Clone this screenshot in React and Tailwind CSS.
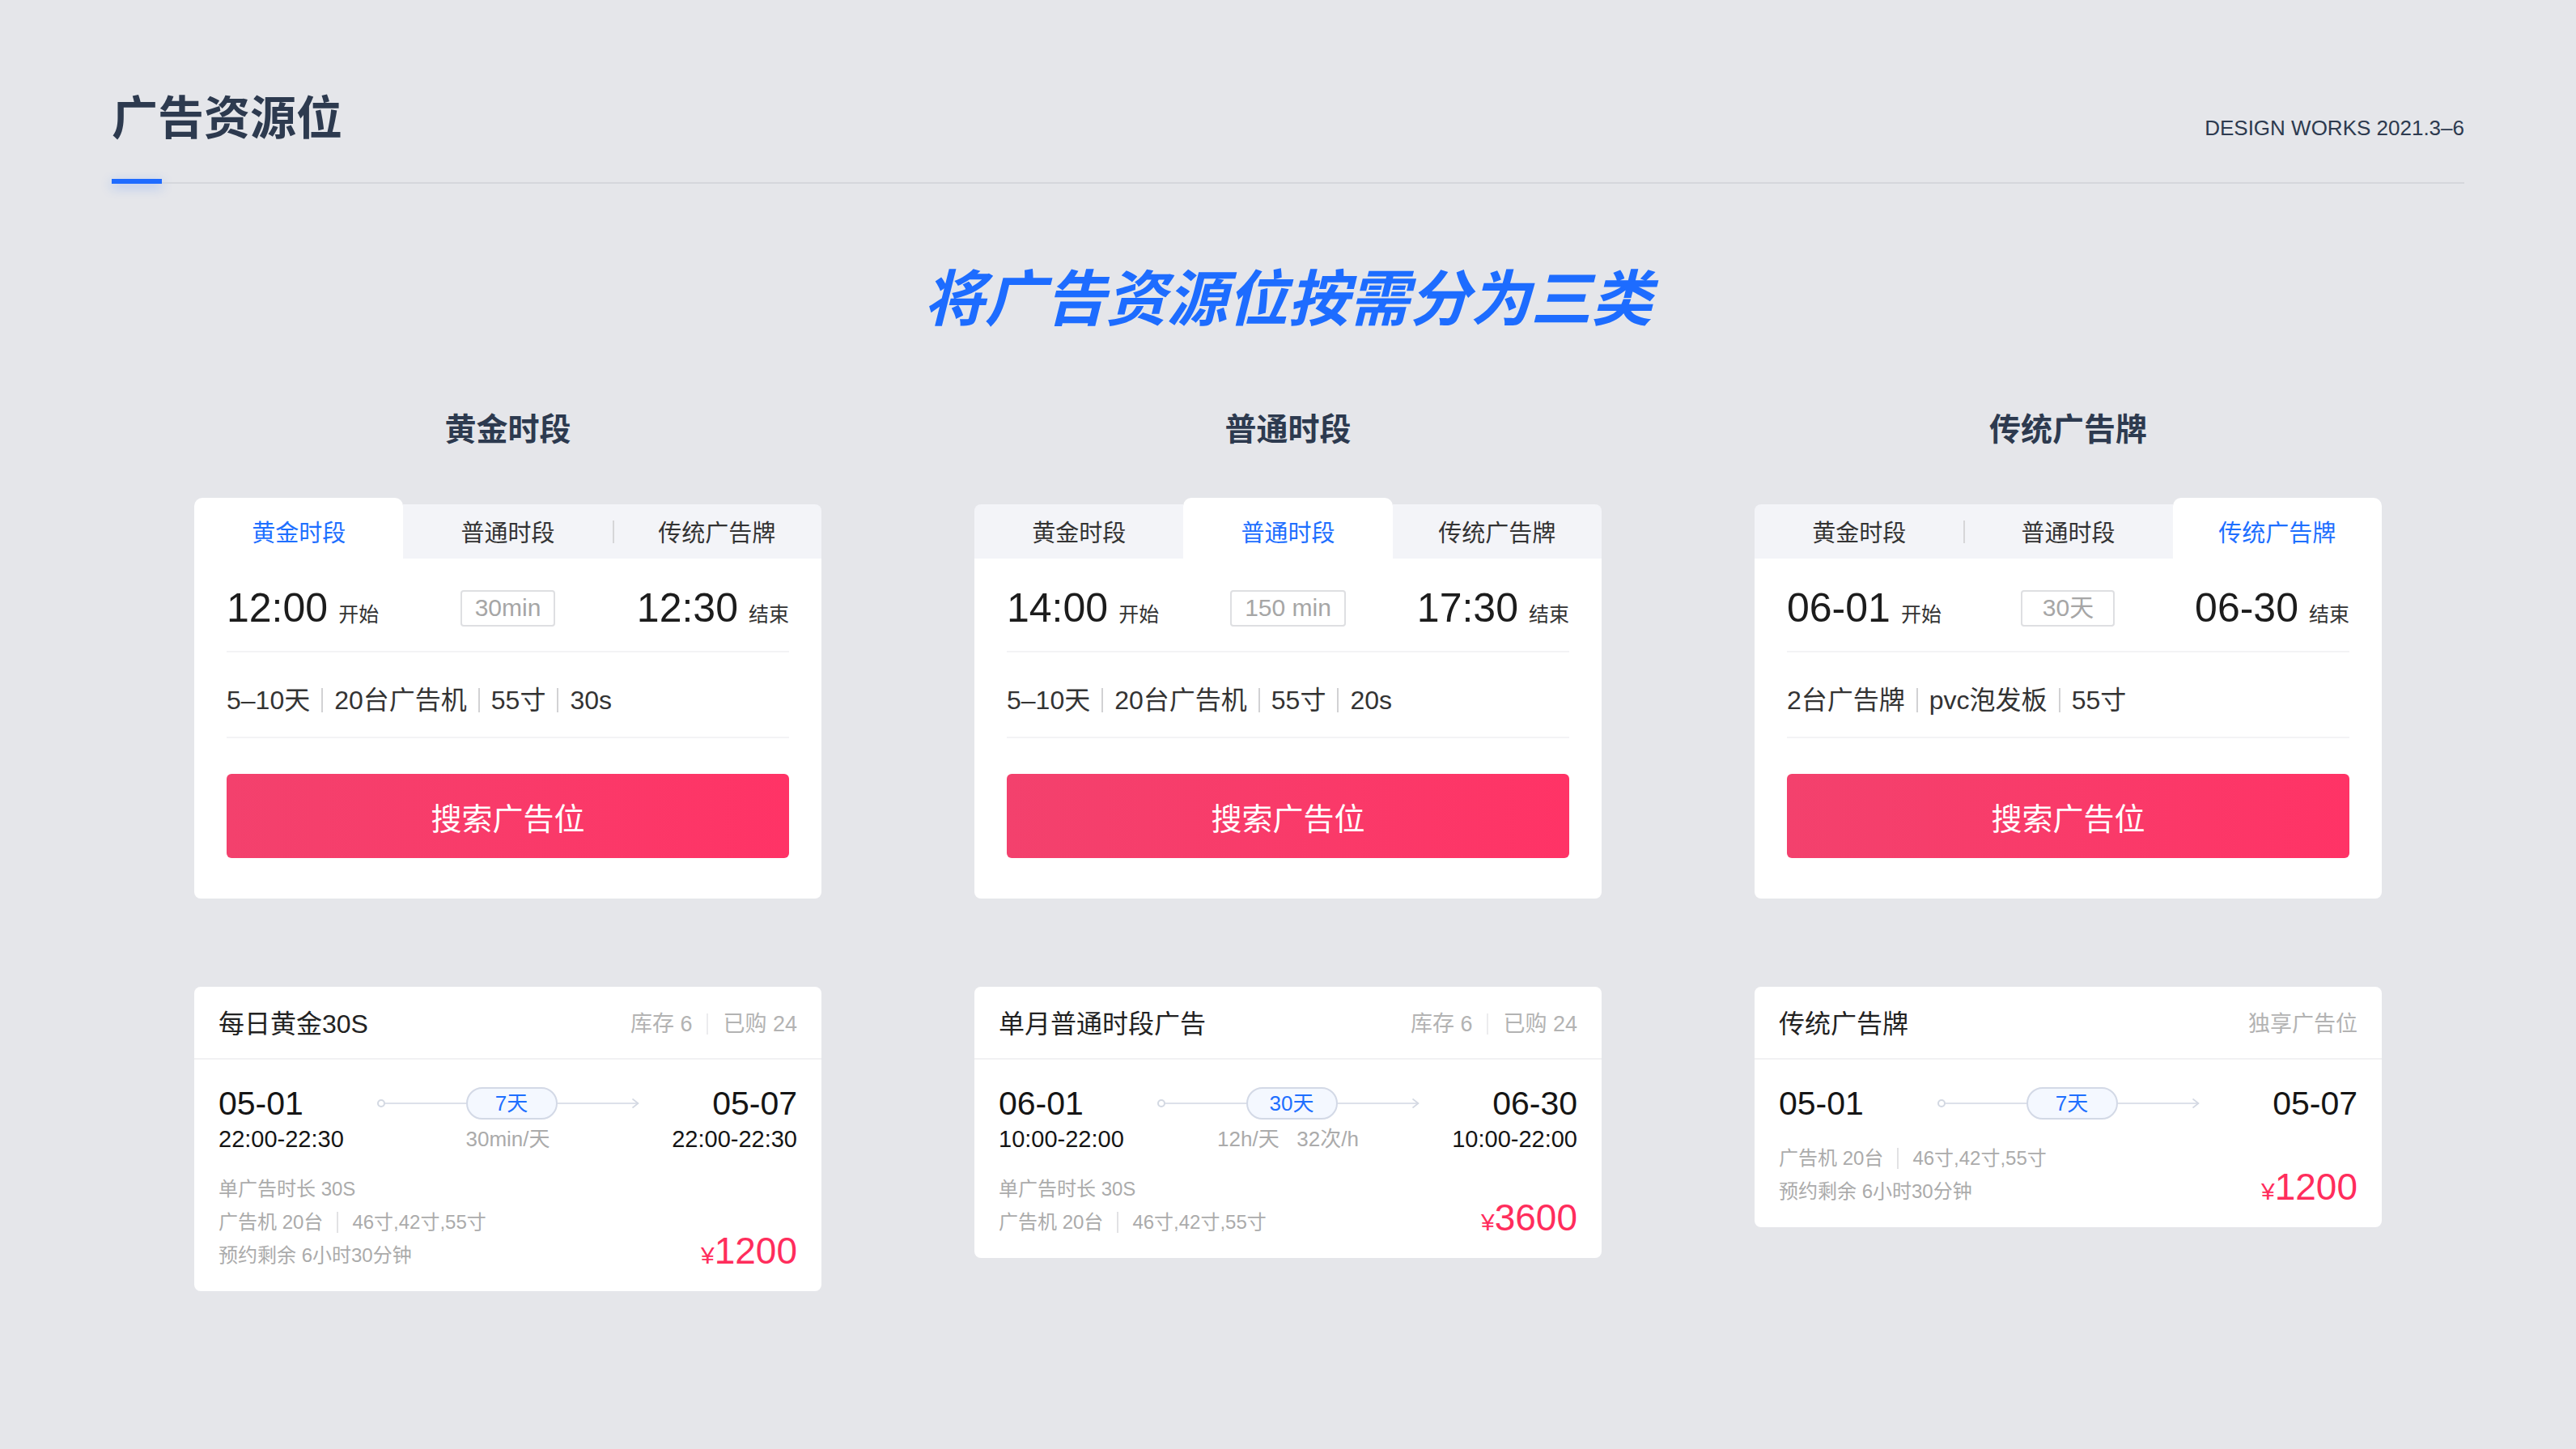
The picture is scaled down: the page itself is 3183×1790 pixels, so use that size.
import React from "react";

const FONT = "font-['Liberation_Sans','Noto_Sans_CJK_SC',sans-serif]";
const CJK = "font-['Noto_Sans_CJK_SC','Liberation_Sans',sans-serif]";

const TAB_LABELS = ["黄金时段", "普通时段", "传统广告牌"];

function Tabs({ active }) {
  return (
    <div className="flex items-end h-[75px]">
      {TAB_LABELS.map((label, i) => {
        const isActive = i === active;
        const showSep = i > 0 && i !== active && i - 1 !== active;
        const corner =
          i === 0 ? "rounded-tl-[8px]" : i === 2 ? "rounded-tr-[8px]" : "";
        return (
          <div
            key={label}
            className={
              isActive
                ? "flex-1 h-[75px] pt-[8px] bg-white rounded-t-[10px] flex items-center justify-center text-[29px] text-[#1e6fff]"
                : `relative flex-1 h-[67px] bg-[#f3f4f8] ${corner} flex items-center justify-center text-[29px] text-[#333]`
            }
          >
            {showSep && (
              <span className="absolute left-0 top-[20px] w-[2px] h-[28px] bg-[#d6d6d8]" />
            )}
            <span className={CJK}>{label}</span>
          </div>
        );
      })}
    </div>
  );
}

function Sep({ cls }) {
  return <span className={cls} />;
}

function SearchCard({ active, start, end, span, specs }) {
  return (
    <div className="mt-[68px]">
      <Tabs active={active} />
      <div className="bg-white rounded-b-[8px] px-[40px]">
        <div className="grid grid-cols-3 items-center h-[116px] pt-[8px] border-b-2 border-[#f3f3f5]">
          <div className="flex items-baseline gap-[13px]">
            <span className="text-[50px] leading-none text-[#1c1c1c]">{start}</span>
            <span className="text-[25px] leading-none text-[#333]">开始</span>
          </div>
          <div className="justify-self-center h-[45px] min-w-[116px] px-[16px] border-2 border-[#dedfe2] rounded-[4px] flex items-center justify-center text-[30px] leading-none text-[#a6a6a6] whitespace-pre">
            {span}
          </div>
          <div className="justify-self-end flex items-baseline gap-[13px]">
            <span className="text-[50px] leading-none text-[#1c1c1c]">{end}</span>
            <span className="text-[25px] leading-none text-[#333]">结束</span>
          </div>
        </div>
        <div className="h-[106px] pt-[14px] flex items-center border-b-2 border-[#f3f3f5] text-[32px] text-[#333]">
          {specs.map((s, i) => (
            <React.Fragment key={s}>
              {i > 0 && <Sep cls="w-[2px] h-[30px] bg-[#d2d2d4] mx-[14px]" />}
              <span>{s}</span>
            </React.Fragment>
          ))}
        </div>
        <div className="pt-[44px] pb-[50px]">
          <div className="h-[104px] rounded-[6px] bg-linear-to-r from-[#f3416d] to-[#ff3366] flex items-center justify-center text-white text-[38px]">
            <span className={CJK}>搜索广告位</span>
          </div>
        </div>
      </div>
    </div>
  );
}

function Timeline({ label }) {
  return (
    <div className="flex items-center w-[324px] justify-self-center">
      <span className="w-[10px] h-[10px] rounded-full border-2 border-[#d3d8e2] shrink-0" />
      <span className="flex-1 h-[2px] bg-[#dde1ea]" />
      <span className="h-[40px] w-[113px] shrink-0 rounded-full border-2 border-[#d3d9e6] bg-[#f4f8ff] text-[#1e6fff] text-[26px] flex items-center justify-center">
        {label}
      </span>
      <span className="flex-1 h-[2px] bg-[#dde1ea]" />
      <svg width="10" height="14" viewBox="0 0 10 14" className="shrink-0 -ml-[9px]">
        <path d="M1.5 1.5 L8.5 7 L1.5 12.5" fill="none" stroke="#d3d8e2" strokeWidth="1.6" />
      </svg>
    </div>
  );
}

function ProductCard({ title, right, start, end, days, times, centerLabel, info, price }) {
  return (
    <div className="mt-[109px] bg-white rounded-[8px]">
      <div className="h-[90px] pt-[4px] px-[30px] flex items-center justify-between border-b-2 border-[#f1f1f3]">
        <span className="text-[32px] text-[#222]">{title}</span>
        <div className="flex items-center text-[27px] text-[#b3b3b3]">
          {right.map((r, i) => (
            <React.Fragment key={r}>
              {i > 0 && <Sep cls="w-[2px] h-[26px] bg-[#ececee] mx-[18px]" />}
              <span className="whitespace-pre">{r}</span>
            </React.Fragment>
          ))}
        </div>
      </div>
      <div className="px-[30px] pt-[30px] pb-[24px]">
        <div className="grid grid-cols-[1fr_324px_1fr] items-center h-[48px]">
          <span className="text-[41px] leading-none text-[#151515]">{start}</span>
          <Timeline label={days} />
          <span className="justify-self-end text-[41px] leading-none text-[#151515]">{end}</span>
        </div>
        {times && (
          <div className="grid grid-cols-[1fr_324px_1fr] items-center h-[32px] mt-[4px]">
            <span className="text-[29px] leading-none text-[#151515]">{times}</span>
            <span className="justify-self-center text-[26px] leading-none text-[#ababab] whitespace-pre">
              {centerLabel}
            </span>
            <span className="justify-self-end text-[29px] leading-none text-[#151515]">{times}</span>
          </div>
        )}
        <div className={`flex justify-between items-end ${times ? "mt-[25px]" : "mt-[23px]"}`}>
          <div className="flex flex-col text-[24px] leading-[41px] text-[#ababab]">
            {info.map((line, i) => (
              <div key={i} className="flex items-center">
                {line.map((part, j) => (
                  <React.Fragment key={j}>
                    {j > 0 && <Sep cls="w-[2px] h-[26px] bg-[#e2e2e4] mx-[17px]" />}
                    <span className="whitespace-pre">{part}</span>
                  </React.Fragment>
                ))}
              </div>
            ))}
          </div>
          <div className="flex items-baseline leading-none text-[#ff2d5c] mb-[3px]">
            <span className="text-[30px]">¥</span>
            <span className="text-[46px]">{price}</span>
          </div>
        </div>
      </div>
    </div>
  );
}

const COLUMNS = [
  {
    heading: "黄金时段",
    search: {
      active: 0,
      start: "12:00",
      end: "12:30",
      span: "30min",
      specs: ["5–10天", "20台广告机", "55寸", "30s"],
    },
    product: {
      title: "每日黄金30S",
      right: ["库存 6", "已购 24"],
      start: "05-01",
      end: "05-07",
      days: "7天",
      times: "22:00-22:30",
      centerLabel: "30min/天",
      info: [["单广告时长 30S"], ["广告机 20台", "46寸,42寸,55寸"], ["预约剩余 6小时30分钟"]],
      price: "1200",
    },
  },
  {
    heading: "普通时段",
    search: {
      active: 1,
      start: "14:00",
      end: "17:30",
      span: "150 min",
      specs: ["5–10天", "20台广告机", "55寸", "20s"],
    },
    product: {
      title: "单月普通时段广告",
      right: ["库存 6", "已购 24"],
      start: "06-01",
      end: "06-30",
      days: "30天",
      times: "10:00-22:00",
      centerLabel: "12h/天   32次/h",
      info: [["单广告时长 30S"], ["广告机 20台", "46寸,42寸,55寸"]],
      price: "3600",
    },
  },
  {
    heading: "传统广告牌",
    search: {
      active: 2,
      start: "06-01",
      end: "06-30",
      span: "30天",
      specs: ["2台广告牌", "pvc泡发板", "55寸"],
    },
    product: {
      title: "传统广告牌",
      right: ["独享广告位"],
      start: "05-01",
      end: "05-07",
      days: "7天",
      times: null,
      centerLabel: null,
      info: [["广告机 20台", "46寸,42寸,55寸"], ["预约剩余 6小时30分钟"]],
      price: "1200",
    },
  },
];

export default function App() {
  return (
    <div className={`${FONT} w-full min-h-[1790px] bg-[#e5e6ea] pb-[100px]`}>
      <div className="px-[138px] pt-[113px]">
        <div className="flex items-end justify-between h-[56px]">
          <h1 className={`${CJK} text-[57px] leading-[56px] font-bold text-[#2d3a4f]`}>广告资源位</h1>
          <span className="text-[26px] leading-[26px] text-[#2d3a4f] -mb-[2px]">DESIGN WORKS 2021.3–6</span>
        </div>
        <div className="mt-[52px] flex items-end h-[6px]">
          <span className="w-[62px] h-[6px] bg-[#1f6bff] shadow-[0_4px_14px_rgba(31,107,255,0.35)]" />
          <span className="flex-1 h-[2px] bg-[#d5d7dc]" />
        </div>
      </div>

      <h2
        className={`${CJK} mt-[97px] text-center text-[75px] leading-[80px] font-bold italic text-[#1d6cff]`}
      >
        将广告资源位按需分为三类
      </h2>

      <div className="mt-[103px] w-[2703px] mx-auto grid grid-cols-3 gap-x-[189px] items-start">
        {COLUMNS.map((col) => (
          <div key={col.heading} className="flex flex-col">
            <div className={`${CJK} text-center text-[39px] leading-[40px] font-bold text-[#2d3a4f]`}>
              {col.heading}
            </div>
            <SearchCard {...col.search} />
            <ProductCard {...col.product} />
          </div>
        ))}
      </div>
    </div>
  );
}
